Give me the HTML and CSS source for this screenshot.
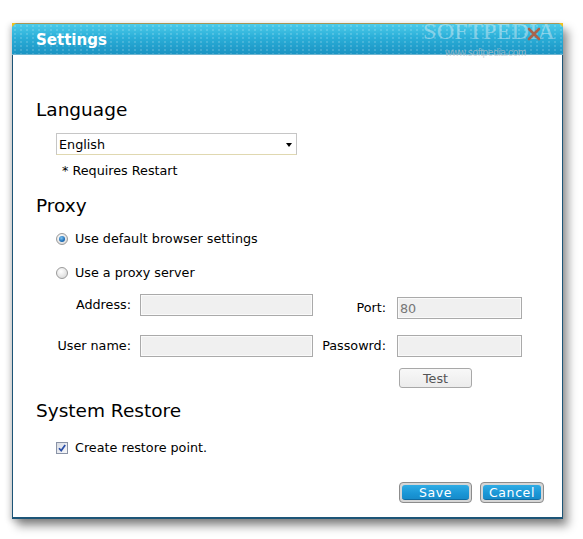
FILE: index.html
```html
<!DOCTYPE html>
<html>
<head>
<meta charset="utf-8">
<link rel="stylesheet" href="styles.css">
</head>
<body>
<div class="window">
  <div class="titlebar">
    <span class="title">Settings</span>
    <span class="wm-big">SOFTPEDIA</span>
    <span class="wm-small">www.softpedia.com</span>
    <span class="close">
      <svg width="14" height="14" viewBox="0 0 14 14"><path d="M2 2 L12 12 M12 2 L2 12" stroke="#a8634d" stroke-width="2.6" stroke-linecap="round"/></svg>
    </span>
  </div>
  <div class="content">
    <div class="heading h-lang">Language</div>
    <div class="select"><span>English</span><span class="arrow"></span></div>
    <div class="note">* Requires Restart</div>

    <div class="heading h-proxy">Proxy</div>
    <div class="option opt1"><span class="radio checked"></span><span>Use default browser settings</span></div>
    <div class="option opt2"><span class="radio"></span><span>Use a proxy server</span></div>

    <div class="proxy-grid">
      <div class="lbl top">Address:</div>
      <div class="field wide top"></div>
      <div class="lbl lbl2 bottom">Port:</div>
      <div class="field narrow bottom"><span class="val">80</span></div>

      <div class="lbl">User name:</div>
      <div class="field wide"></div>
      <div class="lbl lbl2">Passowrd:</div>
      <div class="field narrow"></div>

      <div class="test-cell"><span class="test">Test</span></div>
    </div>

    <div class="heading h-sys">System Restore</div>
    <div class="option opt3"><span class="check">
      <svg width="10" height="10" viewBox="0 0 10 10"><path d="M2 5.2 L4.2 7.6 L8.2 2" fill="none" stroke="#2a4fa8" stroke-width="1.7"/></svg>
    </span><span>Create restore point.</span></div>

    <div class="footer">
      <span class="btn save"><span class="btn-in">Save</span></span>
      <span class="btn cancel"><span class="btn-in">Cancel</span></span>
    </div>
  </div>
</div>
</body>
</html>
```

FILE: styles.css
```css
html, body {
  margin: 0;
  padding: 0;
  background: #ffffff;
}
body {
  width: 583px;
  height: 539px;
  overflow: hidden;
  font-family: "DejaVu Sans", Verdana, sans-serif;
  font-size: 12.75px;
  color: #000;
}
.window {
  margin: 23px 0 0 12px;
  width: 551px;
  height: 496px;
  box-sizing: border-box;
  background: #fff;
  border-left: 1px solid #1d5577;
  border-right: 1px solid #1d5577;
  border-bottom: 2px solid #1d5577;
  box-shadow: 5px 7px 9px rgba(0,0,0,0.42), -2px 2px 6px rgba(0,0,0,0.18);
  display: flex;
  flex-direction: column;
}
.titlebar {
  position: relative;
  height: 32px;
  box-sizing: border-box;
  margin: 0 -1px;
  border-top: 1px solid #a89656;
  border-bottom: 1px solid #6db4cf;
  background:
    radial-gradient(circle, rgba(255,255,255,0.16) 0.9px, transparent 1.3px) 0 0 / 6px 4px,
    linear-gradient(#4ccbe9 0%, #2aaed8 45%, #1b94c3 100%);
  display: flex;
  align-items: center;
  padding-left: 24px;
}
.titlebar::before {
  content: "";
  position: absolute;
  left: 0;
  top: -1px;
  border-top: 4px solid #f0c020;
  border-right: 4px solid transparent;
}
.titlebar::after {
  content: "";
  position: absolute;
  right: 0;
  top: -1px;
  border-top: 4px solid #f0c020;
  border-left: 4px solid transparent;
}
.title {
  color: #fff;
  font-weight: bold;
  font-size: 15px;
  margin-top: 2px;
}
.wm-big {
  position: absolute;
  left: 411px;
  top: -6px;
  font-family: "Liberation Serif", serif;
  font-size: 24px;
  letter-spacing: 0.3px;
  color: rgba(230,240,245,0.45);
}
.wm-small {
  position: absolute;
  left: 433px;
  top: 23px;
  font-family: "Liberation Sans Narrow", "Liberation Sans", sans-serif;
  font-size: 10px;
  color: rgba(190,195,200,0.7);
  letter-spacing: -0.3px;
}
.close {
  position: absolute;
  left: 514px;
  top: 2px;
  width: 16px;
  height: 16px;
  display: flex;
  align-items: center;
  justify-content: center;
}
.content {
  flex: 1;
  display: flex;
  flex-direction: column;
  align-items: flex-start;
  padding-left: 23px;
  padding-right: 18px;
}
.heading {
  font-size: 18.5px;
  line-height: 22px;
  height: 22px;
}
.h-lang { margin-top: 44px; }
.select {
  margin-top: 12px;
  margin-left: 20px;
  width: 241px;
  height: 22px;
  box-sizing: border-box;
  border: 1px solid #c6c6c6;
  border-bottom-color: #e0d8b0;
  display: flex;
  align-items: center;
  justify-content: space-between;
  padding: 0 4px 0 2px;
}
.arrow {
  width: 0;
  height: 0;
  border-left: 3.5px solid transparent;
  border-right: 3.5px solid transparent;
  border-top: 4px solid #000;
  margin-top: 1px;
}
.note {
  margin-top: 8px;
  margin-left: 26px;
  line-height: 16px;
}
.h-proxy { margin-top: 16px; }
.option {
  display: flex;
  align-items: center;
  height: 16px;
  line-height: 16px;
  gap: 7px;
  margin-left: 20px;
}
.opt1 { margin-top: 14px; }
.opt2 { margin-top: 18px; }
.radio {
  width: 12px;
  height: 12px;
  box-sizing: border-box;
  border-radius: 50%;
  border: 1px solid #9a9a9a;
  background: radial-gradient(circle at 40% 35%, #ffffff 0%, #e4e4e4 60%, #cfcfcf 100%);
  display: flex;
  align-items: center;
  justify-content: center;
}
.radio.checked::after {
  content: "";
  width: 6px;
  height: 6px;
  border-radius: 50%;
  background: radial-gradient(circle at 40% 35%, #7fc4f0 0%, #1f6fb8 60%, #124e8e 100%);
}
.proxy-grid {
  margin-top: 13px;
  margin-left: 15px;
  display: grid;
  grid-template-columns: 80px 173px 66px 125px;
  grid-template-rows: 25px 22px 20px;
  column-gap: 9px;
  row-gap: 16px;
}
.lbl {
  height: 22px;
  line-height: 22px;
  text-align: right;
  align-self: center;
}
.lbl2 { margin-left: -2px; margin-right: 2px; }
.lbl.top, .field.top { align-self: start; }
.lbl.bottom, .field.bottom { align-self: end; }
.field {
  height: 22px;
  box-sizing: border-box;
  border: 1px solid #aaaaaa;
  background: #f0f0f0;
  box-shadow: inset 0 0 0 1px #fafafa;
  display: flex;
  align-items: center;
  padding-left: 2px;
}
.val { color: #777; }
.test-cell {
  grid-column: 4;
  grid-row: 3;
  margin-top: -5px;
  margin-left: 2px;
}
.test {
  display: flex;
  align-items: center;
  justify-content: center;
  width: 73px;
  height: 20px;
  box-sizing: border-box;
  border: 1px solid #a8a8a8;
  border-radius: 3px;
  background: linear-gradient(#f8f8f8, #ececec);
  color: #555;
}
.h-sys { margin-top: 7px; }
.opt3 { margin-top: 18px; margin-left: 20px; gap: 7px; }
.check {
  width: 12px;
  height: 12px;
  box-sizing: border-box;
  border: 1px solid #8a93a6;
  background: linear-gradient(135deg, #d8dce4, #f8f8fa);
  display: flex;
  align-items: center;
  justify-content: center;
}
.footer {
  margin-top: 26px;
  align-self: stretch;
  display: flex;
  justify-content: flex-end;
  gap: 8px;
}
.btn {
  display: flex;
  height: 21px;
  box-sizing: border-box;
  border: 1px solid #8c8c8c;
  border-radius: 4px;
  background: #d6d6d6;
  padding: 2px;
}
.save { width: 73px; }
.cancel { width: 64px; }
.btn-in {
  flex: 1;
  display: flex;
  align-items: center;
  justify-content: center;
  border-radius: 3px;
  background: linear-gradient(#30ace4, #1a96d6 60%, #168bca);
  border-bottom: 1px solid #0f6aa0;
  color: #fff;
  letter-spacing: 0.6px;
  font-size: 12.5px;
}
```
